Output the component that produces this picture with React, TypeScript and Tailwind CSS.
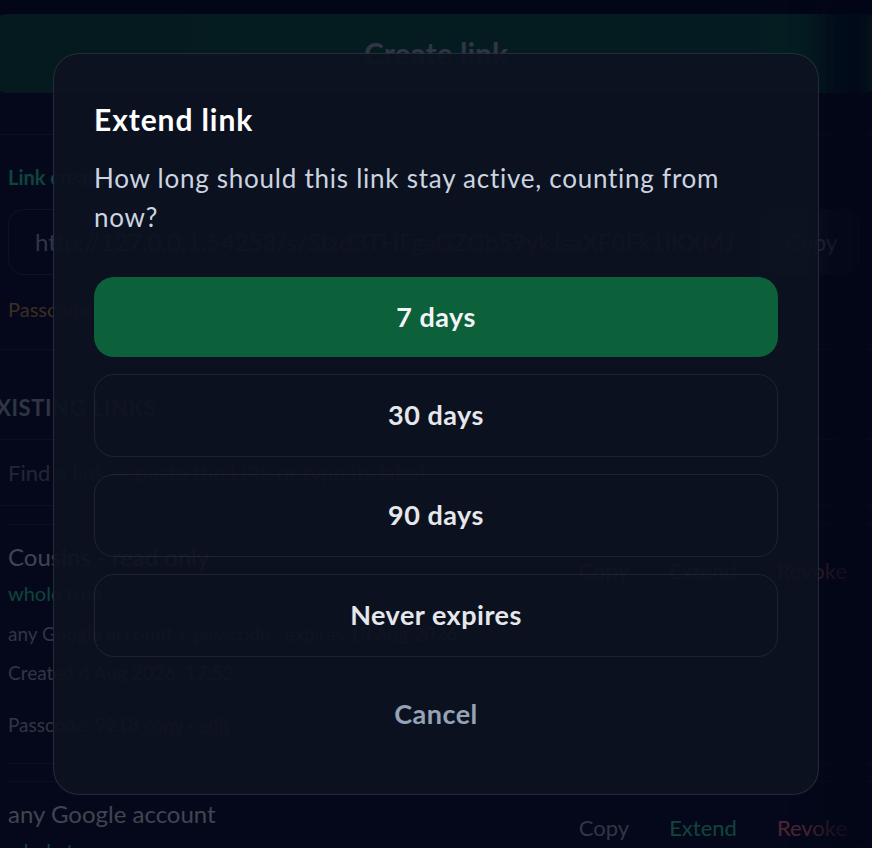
import React from 'react'

const font = { fontFamily: 'Lato, "Noto Sans", sans-serif' }

function LinkCard({ title, full }: { title: string; full?: boolean }) {
  return (
    <div className={`flex items-start justify-between border-y border-white/10 pr-[25px] pt-[14px] ${full ? 'pb-[18px]' : ''}`}>
      <div className="flex flex-col">
        <span className="text-[24px] leading-[36px] text-[#d1d5db]">{title}</span>
        <span className="text-[20px] leading-[36px] text-[#34d399]">whole tree</span>
        {full && (
          <>
            <span className="mt-[3px] text-[19px] leading-[40px] text-[#9ca3af]">any Google account + passcode · expires 18 Aug 2026</span>
            <span className="text-[19px] leading-[38px] text-[#9ca3af]">Created 4 Aug 2026, 17:52</span>
            <span className="mt-[13px] text-[19px] leading-[40px] text-[#9ca3af]">
              Passcode: 9218 <span className="underline">copy</span> · <span className="underline">edit</span>
            </span>
          </>
        )}
      </div>
      <div className="mt-[15px] flex gap-10 text-[22px] leading-[33px]">
        <span className="text-[#9ca3af]">Copy</span>
        <span className="text-[#34d399]">Extend</span>
        <span className="text-[#f87171]">Revoke</span>
      </div>
    </div>
  )
}

function Page() {
  return (
    <div className="h-[848px] w-[872px] overflow-hidden bg-[#0a1022]" style={font}>
      <div className="h-[14px] bg-[#050914]" />
      <div className="-ml-2 flex h-[79px] w-[888px] items-center justify-center rounded-2xl bg-gradient-to-r from-[#0b4a31] to-[#0d553b] text-[30px] font-bold text-[#9ca3af]">
        Create link
      </div>
      <div className="mt-[41px] flex h-[216px] w-[900px] flex-col border-y border-white/10 pl-2 pt-[24px]">
        <span className="text-[20px] font-bold leading-[36px] text-[#34d399]">Link created</span>
        <div className="mt-[14px] flex h-[66px] items-center gap-3">
          <div className="flex h-full w-[740px] items-center overflow-hidden whitespace-nowrap rounded-2xl border border-white/15 px-[26px] text-[24px] text-[#9ca3af]">
            http://127.0.0.1:54253/s/Stzd3THFgaGZGb59ykJsaXF0Fk1lKXMJ
          </div>
          <div className="flex h-full w-[100px] items-center rounded-2xl bg-white/10 pl-[25px] text-[23px] text-[#9ca3af]">Copy</div>
        </div>
        <span className="mt-[16px] text-[20px] leading-[36px] text-[#c08a3e]">
          Passcode for this link is shown once — note it down below.
        </span>
      </div>
      <div className="-ml-[17px] flex h-[90px] items-end border-b border-white/10 pb-[15px] text-[22px] font-bold tracking-wide text-[#9ca3af]">
        EXISTING LINKS
      </div>
      <div className="flex h-[66px] items-center border-b border-white/10 pl-2 text-[22px] text-[#6b7280]">
        Find a link — paste the URL or type its label
      </div>
      <div className="mt-[18px] pl-2">
        <LinkCard title="Cousins - read only" full />
      </div>
      <div className="mt-[17px] pl-2">
        <LinkCard title="any Google account" />
      </div>
    </div>
  )
}

const options = ['30 days', '90 days', 'Never expires']

export default function App() {
  return (
    <div className="relative h-[848px] w-[872px] overflow-hidden" style={font}>
      <Page />
      <div className="absolute inset-0 bg-[#020617]/70" />
      <div className="absolute inset-y-0 right-0 w-[70px] bg-gradient-to-r from-transparent via-[#020617]/75 to-[#020617]/90 blur-sm" />
      <div className="absolute inset-0 flex items-center justify-center">
        <div className="flex w-[766px] flex-col rounded-[26px] border border-white/10 bg-[#0d1220]/[0.93] px-[40px] pb-[40px] pt-[47px]">
          <h2 className="text-[30px] font-bold leading-[36px] tracking-[0.9px] text-white">Extend link</h2>
          <p className="mt-[22px] text-[26px] leading-[39px] tracking-[0.75px] text-[#cbd5e1]">
            How long should this link stay active, counting from now?
          </p>
          <div className="mt-[40px] flex flex-col gap-[17px]">
            <button className="flex h-[80px] items-center justify-center rounded-[20px] bg-[#0c603a] text-[27px] font-bold tracking-[0.5px] text-[#f3f4f6]">
              7 days
            </button>
            {options.map((o) => (
              <button
                key={o}
                className="flex h-[83px] items-center justify-center rounded-[20px] border border-white/[0.08] text-[27px] font-bold tracking-[0.5px] text-[#e5e7eb]"
              >
                {o}
              </button>
            ))}
            <button className="flex h-[80px] items-center justify-center text-[27px] font-bold tracking-[0.5px] text-[#94a3b8]">
              Cancel
            </button>
          </div>
        </div>
      </div>
    </div>
  )
}
